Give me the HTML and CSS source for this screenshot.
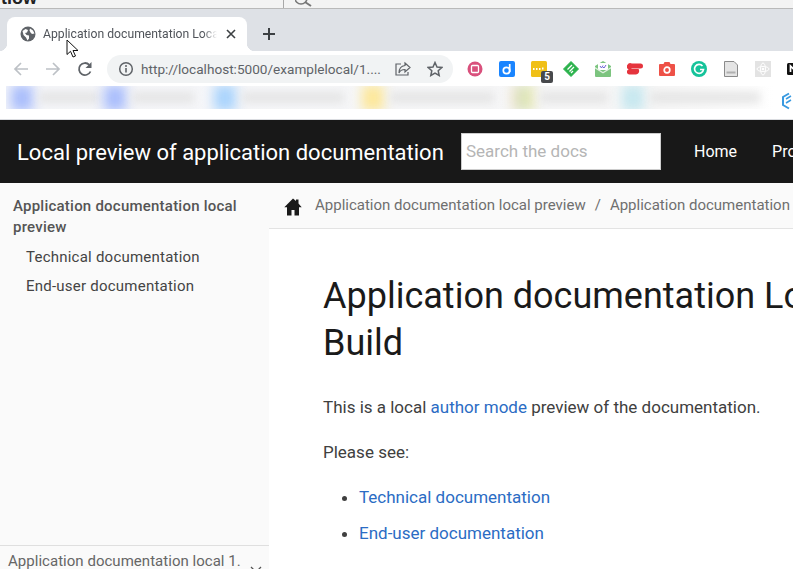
FILE: index.html
```html
<!DOCTYPE html>
<html>
<head>
<meta http-equiv="Content-Type" content="text/html; charset=utf-8"/>
<title>Application documentation Local Build</title>
<link rel="stylesheet" href="styles.css">
</head>
<body>
<div class="topstrip">
  <div class="topstrip-left"><span class="topstrip-text">tlow</span></div>
  <div class="topstrip-right">
    <svg class="topstrip-search" width="18" height="16" viewBox="0 0 18 16"><circle cx="6" cy="-2" r="6" fill="none" stroke="#777" stroke-width="1.600"/><path d="M10 2l6 4" stroke="#777" stroke-width="2"/></svg>
  </div>
</div>

<div class="tabbar">
  <div class="tab">
    <svg class="tab-globe" width="16" height="16" viewBox="0 0 16 16"><circle cx="8" cy="8" r="7.500" fill="#5f6368"/><path d="M2.500 5l3-2 2.500 1-1 2.500-2 .5 1.500 2 2.500.5v3l-1.500 2-1.500-3-2.500-2.500zM10 2.500l3 2 1.500 3-2.500.5-1.500-1.500-1-2z" fill="#fff"/></svg>
    <span class="tab-title">Application documentation Local Build</span>
    <svg class="tab-close" width="10" height="10" viewBox="0 0 10 10"><path d="M1 1l8 8M9 1l-8 8" stroke="#3c4043" stroke-width="1.600"/></svg>
  </div>
  <svg class="newtab" width="14" height="14" viewBox="0 0 14 14"><path d="M7 1v12M1 7h12" stroke="#3c4043" stroke-width="2"/></svg>
</div>

<div class="toolbar">
  <svg class="navicon" width="16" height="16" viewBox="0 0 16 16"><path d="M15 8H2M8 2L2 8l6 6" fill="none" stroke="#bdc1c6" stroke-width="1.700"/></svg>
  <svg class="navicon" width="16" height="16" viewBox="0 0 16 16"><path d="M1 8h13M8 2l6 6-6 6" fill="none" stroke="#bdc1c6" stroke-width="1.700"/></svg>
  <svg class="navicon" width="16" height="16" viewBox="0 0 16 16"><path d="M13.500 10.500A6 6 0 1 1 12.300 3.800" fill="none" stroke="#5f6368" stroke-width="1.800"/><path d="M14.500 1v6h-6z" fill="#5f6368"/></svg>
  <div class="omnibox">
    <svg class="omni-info" width="16" height="16" viewBox="0 0 16 16"><circle cx="8" cy="8" r="6.300" fill="none" stroke="#5f6368" stroke-width="1.500"/><path d="M8 7v4.500" stroke="#5f6368" stroke-width="1.600"/><circle cx="8" cy="4.900" r="1" fill="#5f6368"/></svg>
    <span class="omni-url">http://localhost:5000/examplelocal/1....</span>
    <svg class="omni-share" width="16" height="16" viewBox="0 0 16 16"><path d="M6 3H1v11h12v-3" fill="none" stroke="#5f6368" stroke-width="1.200"/><path d="M10 2l5 4.500-5 4.500V8.500C7 8.500 5 9.500 4 12c0-4 2-7 6-7.500z" fill="none" stroke="#5f6368" stroke-width="1.200"/></svg>
    <svg class="omni-star" width="16" height="16" viewBox="0 0 16 16"><path d="M8 1.500l2 4.500 4.800.5-3.600 3.200 1 4.800L8 12.100l-4.200 2.400 1-4.800L1.200 6.500 6 6z" fill="none" stroke="#5f6368" stroke-width="1.500"/></svg>
  </div>
  <div class="extensions">
    <svg width="16" height="16" viewBox="0 0 16 16"><circle cx="8" cy="8" r="7.500" fill="#d9507c"/><rect x="4.500" y="4.500" width="7" height="7" rx="1" fill="none" stroke="#fff" stroke-width="1.300"/></svg>
    <svg width="16" height="16" viewBox="0 0 16 16"><rect width="16" height="16" rx="2" fill="#1a85ff"/><circle cx="7.500" cy="9.500" r="3.200" fill="none" stroke="#fff" stroke-width="1.700"/><path d="M10.700 3v8" stroke="#fff" stroke-width="1.700"/></svg>
    <div class="ext-badged">
      <svg width="16" height="16" viewBox="0 0 16 16"><rect width="16" height="16" rx="1.500" fill="#f0c017"/><path d="M2 8h1.500M5 8h1.500M8 8h1.500M11 7.500h1.500" stroke="#fff" stroke-width="2"/></svg>
      <span class="ext-badge">5</span>
    </div>
    <svg width="16" height="16" viewBox="0 0 16 16"><path d="M8 .5l7.500 7.500-7.500 7.500L.5 8z" fill="#2bb24c" stroke="#2bb24c" stroke-linejoin="round"/><path d="M4.500 8.500L9 4M6.500 10.500L11 6M8 12l2-2" stroke="#fff" stroke-width="1.300"/></svg>
    <svg width="16" height="16" viewBox="0 0 16 16"><path d="M0 5l8-5 8 5v10a1 1 0 0 1-1 1H1a1 1 0 0 1-1-1z" fill="#7cc47f"/><rect x="3" y="2" width="10" height="7" fill="#fff"/><path d="M0 6l8 5 8-5v1.500l-8 5-8-5z" fill="#dff0df"/><path d="M5 5l1.500 2L8 4.500M8 6l1 1 2-3" fill="none" stroke="#6b63d6" stroke-width="1"/></svg>
    <svg width="16" height="16" viewBox="0 0 16 16"><path d="M5 2.500h8.500a2.500 2.500 0 0 1 2.500 2.500 2.500 2.500 0 0 1-2.500 2.500H5A1.500 1.500 0 0 0 4 8h7.500a2 2 0 0 1 .5 1 3.500 3.500 0 0 1-3 4.500H2.500a2.500 2.500 0 0 1-.8-4.900A3 3 0 0 1 5 2.500z" fill="#e5343d"/></svg>
    <svg width="16" height="16" viewBox="0 0 16 16"><path d="M1 3h3.500l1-2h5l1 2H15a1 1 0 0 1 1 1v10a1 1 0 0 1-1 1H1a1 1 0 0 1-1-1V4a1 1 0 0 1 1-1z" fill="#ee5147"/><circle cx="8" cy="9" r="2.800" fill="none" stroke="#fff" stroke-width="1.700"/></svg>
    <svg width="16" height="16" viewBox="0 0 16 16"><circle cx="8" cy="8" r="8" fill="#15c39a"/><path d="M11.500 5A4.500 4.500 0 1 0 12.500 8.500H9" fill="none" stroke="#fff" stroke-width="1.700"/></svg>
    <svg width="16" height="16" viewBox="0 0 16 16"><path d="M1.500.5H11l3.500 3.500v11.500h-13z" fill="#e4e4e4" stroke="#8a8a8a"/><rect x="3.500" y="10.500" width="9" height="2" fill="#b0b0b0"/></svg>
    <svg width="16" height="16" viewBox="0 0 16 16"><rect width="16" height="16" fill="#e3e3e3"/><ellipse cx="8" cy="8" rx="6" ry="2.500" fill="none" stroke="#fff"/><ellipse cx="8" cy="8" rx="2.500" ry="6" fill="none" stroke="#fff"/><circle cx="8" cy="8" r="1.300" fill="#fff"/></svg>
    <svg width="16" height="16" viewBox="0 0 16 16"><rect y="2" width="16" height="12" rx="1.500" fill="#111"/><path d="M3.500 11V5l3 3 3-3v6" fill="none" stroke="#fff" stroke-width="1.700"/></svg>
  </div>
</div>

<div class="bookmarks">
  <div class="bm-blur">
    <span class="bm-blob bm-blue"></span><span class="bm-text bm-w60"></span>
    <span class="bm-blob bm-blue"></span><span class="bm-text bm-w62"></span>
    <span class="bm-blob bm-sky"></span><span class="bm-text bm-w102"></span>
    <span class="bm-blob bm-yellow"></span><span class="bm-text bm-w104"></span>
    <span class="bm-blob bm-mixed"></span><span class="bm-text bm-w68"></span>
    <span class="bm-blob bm-teal"></span><span class="bm-text bm-w110"></span>
  </div>
  <svg class="bm-hex" width="13" height="18" viewBox="0 0 13 18"><path d="M7 1.500L1 5v8l6 3.500" fill="none" stroke="#3a9ae0" stroke-width="2"/><path d="M4 7l5-3M4 11l5-3" stroke="#3a9ae0" stroke-width="1.500"/></svg>
</div>

<header class="sitehead">
  <div class="sitehead-title">Local preview of application documentation</div>
  <div class="sitehead-search">Search the docs</div>
  <nav class="sitehead-nav">
    <a class="sitehead-link">Home</a>
    <a class="sitehead-link">Products</a>
  </nav>
</header>

<div class="docs">
  <aside class="sidebar">
    <div class="sidebar-tree">
      <div class="tree-root">Application documentation local preview</div>
      <div class="tree-item">Technical documentation</div>
      <div class="tree-item">End-user documentation</div>
    </div>
    <div class="sidebar-version">
      <span class="version-label">Application documentation local 1.</span>
      <svg class="version-chevron" width="12" height="8" viewBox="0 0 12 8"><path d="M1 1l5 5 5-5" fill="none" stroke="#555" stroke-width="1.300"/></svg>
    </div>
  </aside>
  <main class="content">
    <div class="crumbs">
      <svg class="crumbs-home" width="18" height="18" viewBox="0 0 18 18"><path d="M9 .5L.300 9.200h2.700V17.500h4.500v-5.500h3V17.500h4.500V9.200h2.700L14.500 5.500V1.500h-2.500v1.500z" fill="#1a1a1a"/></svg>
      <span class="crumbs-text">Application documentation local preview</span>
      <span class="crumbs-sep">/</span>
      <span class="crumbs-text">Application documentation Local Build</span>
    </div>
    <article class="article">
      <h1 class="article-title">Application documentation Local Build</h1>
      <p class="article-para">This is a local <a class="article-link">author mode</a> preview of the documentation.</p>
      <p class="article-para">Please see:</p>
      <ul class="article-list">
        <li><a class="article-link">Technical documentation</a></li>
        <li><a class="article-link">End-user documentation</a></li>
      </ul>
    </article>
  </main>
</div>

<svg class="cursor" width="14" height="20" viewBox="0 0 14 20"><path d="M1 1v14.500l3.500-3.200 2.500 5.700 2.500-1-2.500-5.500H12z" fill="#fff" stroke="#111" stroke-width="1"/></svg>
</body>
</html>
```

FILE: styles.css
```css
html, body {
  margin: 0;
  height: 569px;
  overflow: hidden;
}

body {
  width: 793px;
  position: relative;
  font-family: Roboto, "Liberation Sans", sans-serif;
  background-color: white;
  display: flex;
  flex-direction: column;
}

/* mouse pointer caught in the screenshot */
.cursor {
  position: absolute;
  left: 66px;
  top: 39px;
}

/* window behind the browser */
.topstrip {
  height: 8px;
  flex: none;
  display: flex;
  background: #f3f3f3;
  border-bottom: 1px solid #b9b9b9;
  overflow: hidden;
}
.topstrip-left {
  width: 283px;
  border-right: 1px solid #a8a8a8;
  overflow: hidden;
}
.topstrip-text {
  display: block;
  font: bold 18px "Liberation Sans", sans-serif;
  color: #222;
  margin: -12px 0 0 1px;
  line-height: 20px;
}
.topstrip-search {
  display: block;
  margin-left: 11px;
}

/* tabs */
.tabbar {
  height: 42px;
  flex: none;
  background: #dee1e6;
  display: flex;
  align-items: flex-end;
}
.tab {
  width: 240px;
  height: 34px;
  margin-left: 7px;
  box-sizing: border-box;
  padding: 0 11px 0 13px;
  background: white;
  border-radius: 8px 8px 0 0;
  display: flex;
  align-items: center;
  position: relative;
}
.tab::before, .tab::after {
  content: "";
  position: absolute;
  bottom: 0;
  width: 8px;
  height: 8px;
}
.tab::before {
  left: -8px;
  background: radial-gradient(circle at 0 0, transparent 8px, white 8.500px);
}
.tab::after {
  right: -8px;
  background: radial-gradient(circle at 100% 0, transparent 8px, white 8.500px);
}
.tab-globe {
  flex: none;
}
.tab-title {
  margin-left: 7px;
  flex: 1;
  min-width: 0;
  font-size: 12.200px;
  color: #50545a;
  white-space: nowrap;
  overflow: hidden;
  -webkit-mask-image: linear-gradient(to right, black 92%, transparent);
  mask-image: linear-gradient(to right, black 92%, transparent);
}
.tab-close {
  flex: none;
  margin-left: 9px;
}
.newtab {
  margin: 0 0 10px 15px;
}

/* address bar */
.toolbar {
  height: 35px;
  flex: none;
  background: white;
  display: flex;
  align-items: center;
}
.navicon {
  flex: none;
  margin-left: 13px;
  margin-right: 3px;
}
.omnibox {
  width: 346px;
  height: 28px;
  margin-left: 11px;
  flex: none;
  box-sizing: border-box;
  padding: 0 10px 0 11px;
  background: #f1f3f4;
  border-radius: 14px;
  display: flex;
  align-items: center;
}
.omni-url {
  margin-left: 7px;
  flex: 1;
  font-size: 13.600px;
  color: #5f6368;
  white-space: nowrap;
}
.omni-star {
  margin-left: 16px;
}
.extensions {
  margin-left: 14px;
  display: flex;
  gap: 16px;
  flex: none;
}
.extensions svg {
  display: block;
}
.ext-badged {
  position: relative;
}
.ext-badge {
  position: absolute;
  left: 10px;
  top: 10px;
  width: 12px;
  height: 12px;
  background: #47494c;
  border-radius: 2px;
  color: white;
  font: bold 10px/12px Roboto, sans-serif;
  text-align: center;
}

/* bookmarks, blurred out in the original */
.bookmarks {
  height: 34px;
  flex: none;
  background: white;
  border-bottom: 1px solid #dadce0;
  box-sizing: border-box;
  display: flex;
  align-items: flex-start;
  overflow: hidden;
}
.bm-blur {
  margin-left: 6px;
  width: 768px;
  height: 23px;
  flex: none;
  background: linear-gradient(to right, #f5f6fa, #f7f7f7 85%, #fff);
  display: flex;
  align-items: center;
  overflow: hidden;
}
.bm-blob {
  width: 22px;
  height: 26px;
  flex: none;
  filter: blur(6px);
}
.bm-blue { background: #a9bdfb; margin-left: 5px; }
.bm-sky { background: #a9d3fc; margin-left: 20px; }
.bm-yellow { background: #fce79a; margin-left: 18px; }
.bm-mixed { background: linear-gradient(to right, #f4dcc0, #cfe4be, #f4e8a8); margin-left: 18px; }
.bm-teal { background: #c6e7ef; margin-left: 14px; }
.bm-text {
  height: 11px;
  flex: none;
  margin-left: 6px;
  background: #e4e4e4;
  filter: blur(5px);
}
.bm-w60 { width: 60px; }
.bm-w62 { width: 62px; }
.bm-w68 { width: 68px; }
.bm-w102 { width: 102px; }
.bm-w104 { width: 104px; }
.bm-w110 { width: 110px; }
.bm-hex {
  margin: 6px 0 0 8px;
  flex: none;
}

/* site header */
.sitehead {
  height: 63px;
  flex: none;
  background: #181818;
  color: white;
  display: flex;
  align-items: center;
  padding-left: 17px;
  white-space: nowrap;
}
.sitehead-title {
  font-size: 22px;
  flex: none;
  width: 444px;
  padding-top: 2px;
}
.sitehead-search {
  width: 200px;
  height: 37px;
  flex: none;
  box-sizing: border-box;
  padding-left: 4px;
  background: white;
  border: 1px solid #ccc;
  color: #b5b5b5;
  font-size: 17px;
  line-height: 35px;
}
.sitehead-nav {
  display: flex;
  gap: 35px;
  margin-left: 33px;
  font-size: 16px;
}

/* sidebar and page */
.docs {
  flex: 1;
  min-height: 0;
  display: flex;
}
.sidebar {
  width: 269px;
  flex: none;
  background: #fafafa;
  display: flex;
  flex-direction: column;
}
.sidebar-tree {
  flex: 1;
  padding: 13px 13px 0;
  font-size: 15px;
  color: #444;
  letter-spacing: .23px;
}
.tree-root {
  font-weight: 500;
  line-height: 21px;
  color: #555;
}
.tree-item {
  margin: 9px 0 0 13px;
  line-height: 20px;
}
.sidebar-version {
  height: 23px;
  border-top: 1px solid #dfdfdf;
  padding-left: 8px;
  display: flex;
  font-size: 15px;
  letter-spacing: .03px;
  line-height: 31px;
  color: #666;
  white-space: nowrap;
  overflow: hidden;
}
.version-chevron {
  margin: 20px 0 0 9px;
  flex: none;
}
.content {
  flex: 1;
  min-width: 0;
  overflow: hidden;
}
.crumbs {
  height: 46px;
  box-sizing: border-box;
  border-bottom: 1px solid #e3e3e3;
  padding: 0 0 2px 15px;
  background: #fafafa;
  display: flex;
  align-items: center;
  white-space: nowrap;
  font-size: 15px;
  color: #6f6f6f;
}
.crumbs-home {
  flex: none;
  margin: 4px 13px 0 0;
}
.crumbs-sep {
  margin: 0 9px;
}
.article {
  padding: 44px 0 0 54px;
  width: 560px;
  color: #404040;
  font-size: 17px;
}
.article-title {
  margin: 0 0 30px;
  font-size: 36px;
  font-weight: 400;
  line-height: 47px;
  color: #1a1a1a;
}
.article-para {
  margin: 0 0 25px;
  line-height: 20px;
}
.article-link {
  color: #2b6cc4;
}
.article-list {
  margin: 0;
  padding-left: 36px;
}
.article-list li {
  margin-bottom: 16px;
  line-height: 20px;
}
```
